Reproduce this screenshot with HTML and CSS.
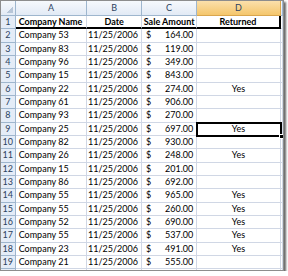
FILE: index.html
```html
<!DOCTYPE html>
<html lang="en">
<head>
  <meta charset="UTF-8" />
  <title>Sales sheet</title>
  <link rel="stylesheet" href="styles.css">
</head>
<body>

  <div class="sheet">
    <div class="row head">
      <div class="corner"></div>
      <div>A</div>
      <div>B</div>
      <div>C</div>
      <div class="active">D</div>
      <div></div>
    </div>
    <div class="row">
      <div class="num">1</div>
      <div class="cell title name">Company Name</div>
      <div class="cell title mid">Date</div>
      <div class="cell title mid">Sale Amount</div>
      <div class="cell title mid end">Returned</div>
      <div class="cell"></div>
    </div>
    <div class="row">
      <div class="num">2</div>
      <div class="cell name">Company 53</div>
      <div class="cell date">11/25/2006</div>
      <div class="cell money"><span>$</span><span>164.00</span></div>
      <div class="cell mid"></div>
      <div class="cell"></div>
    </div>
    <div class="row">
      <div class="num">3</div>
      <div class="cell name">Company 83</div>
      <div class="cell date">11/25/2006</div>
      <div class="cell money"><span>$</span><span>119.00</span></div>
      <div class="cell mid"></div>
      <div class="cell"></div>
    </div>
    <div class="row">
      <div class="num">4</div>
      <div class="cell name">Company 96</div>
      <div class="cell date">11/25/2006</div>
      <div class="cell money"><span>$</span><span>349.00</span></div>
      <div class="cell mid"></div>
      <div class="cell"></div>
    </div>
    <div class="row">
      <div class="num">5</div>
      <div class="cell name">Company 15</div>
      <div class="cell date">11/25/2006</div>
      <div class="cell money"><span>$</span><span>843.00</span></div>
      <div class="cell mid"></div>
      <div class="cell"></div>
    </div>
    <div class="row">
      <div class="num">6</div>
      <div class="cell name">Company 22</div>
      <div class="cell date">11/25/2006</div>
      <div class="cell money"><span>$</span><span>274.00</span></div>
      <div class="cell mid">Yes</div>
      <div class="cell"></div>
    </div>
    <div class="row">
      <div class="num">7</div>
      <div class="cell name">Company 61</div>
      <div class="cell date">11/25/2006</div>
      <div class="cell money"><span>$</span><span>906.00</span></div>
      <div class="cell mid"></div>
      <div class="cell"></div>
    </div>
    <div class="row">
      <div class="num">8</div>
      <div class="cell name">Company 93</div>
      <div class="cell date">11/25/2006</div>
      <div class="cell money"><span>$</span><span>270.00</span></div>
      <div class="cell mid"></div>
      <div class="cell"></div>
    </div>
    <div class="row">
      <div class="num active">9</div>
      <div class="cell name">Company 25</div>
      <div class="cell date">11/25/2006</div>
      <div class="cell money"><span>$</span><span>697.00</span></div>
      <div class="cell mid selected">Yes</div>
      <div class="cell"></div>
    </div>
    <div class="row">
      <div class="num">10</div>
      <div class="cell name">Company 82</div>
      <div class="cell date">11/25/2006</div>
      <div class="cell money"><span>$</span><span>930.00</span></div>
      <div class="cell mid"></div>
      <div class="cell"></div>
    </div>
    <div class="row">
      <div class="num">11</div>
      <div class="cell name">Company 26</div>
      <div class="cell date">11/25/2006</div>
      <div class="cell money"><span>$</span><span>248.00</span></div>
      <div class="cell mid">Yes</div>
      <div class="cell"></div>
    </div>
    <div class="row">
      <div class="num">12</div>
      <div class="cell name">Company 15</div>
      <div class="cell date">11/25/2006</div>
      <div class="cell money"><span>$</span><span>201.00</span></div>
      <div class="cell mid"></div>
      <div class="cell"></div>
    </div>
    <div class="row">
      <div class="num">13</div>
      <div class="cell name">Company 86</div>
      <div class="cell date">11/25/2006</div>
      <div class="cell money"><span>$</span><span>692.00</span></div>
      <div class="cell mid"></div>
      <div class="cell"></div>
    </div>
    <div class="row">
      <div class="num">14</div>
      <div class="cell name">Company 55</div>
      <div class="cell date">11/25/2006</div>
      <div class="cell money"><span>$</span><span>965.00</span></div>
      <div class="cell mid">Yes</div>
      <div class="cell"></div>
    </div>
    <div class="row">
      <div class="num">15</div>
      <div class="cell name">Company 55</div>
      <div class="cell date">11/25/2006</div>
      <div class="cell money"><span>$</span><span>260.00</span></div>
      <div class="cell mid">Yes</div>
      <div class="cell"></div>
    </div>
    <div class="row">
      <div class="num">16</div>
      <div class="cell name">Company 52</div>
      <div class="cell date">11/25/2006</div>
      <div class="cell money"><span>$</span><span>690.00</span></div>
      <div class="cell mid">Yes</div>
      <div class="cell"></div>
    </div>
    <div class="row">
      <div class="num">17</div>
      <div class="cell name">Company 55</div>
      <div class="cell date">11/25/2006</div>
      <div class="cell money"><span>$</span><span>537.00</span></div>
      <div class="cell mid">Yes</div>
      <div class="cell"></div>
    </div>
    <div class="row">
      <div class="num">18</div>
      <div class="cell name">Company 23</div>
      <div class="cell date">11/25/2006</div>
      <div class="cell money"><span>$</span><span>491.00</span></div>
      <div class="cell mid">Yes</div>
      <div class="cell"></div>
    </div>
    <div class="row">
      <div class="num">19</div>
      <div class="cell name">Company 21</div>
      <div class="cell date">11/25/2006</div>
      <div class="cell money"><span>$</span><span>555.00</span></div>
      <div class="cell mid"></div>
      <div class="cell"></div>
    </div>
    <!-- row 20 is only a sliver under the frame edge -->
    <div class="row">
      <div class="num"></div>
      <div class="cell"></div>
      <div class="cell"></div>
      <div class="cell"></div>
      <div class="cell"></div>
      <div class="cell"></div>
    </div>
  </div>

</body>
</html>
```

FILE: styles.css
```css
body {
  margin: 0;
  background: #fff;
  font-family: Lato, 'Liberation Sans', sans-serif;
}
.sheet {
  width: 282px;
  height: 269px;
  border: 1px solid #8d8d8d;
  overflow: hidden;
  background: #fff;
  box-shadow: 2px 2px 2px rgba(0, 0, 0, 0.6);
}
.row {
  display: grid;
  grid-template-columns: 14.7px 71.6px 54.7px 55.3px 83.4px 1fr;
  height: 13.333px;
}
.row > div {
  box-sizing: border-box;
  border-right: 1px solid #d0d7e5;
  border-bottom: 1px solid #d0d7e5;
  font-size: 9px;
  line-height: 12.6px;
  white-space: nowrap;
  overflow: hidden;
  color: #000;
}
.head {
  height: 15px;
}
.head > div {
  background: linear-gradient(#f6f9fc, #e2eaf5);
  border-color: #9eb6ce;
  text-align: center;
  line-height: 14px;
  color: #2b4260;
}
.head .active,
.num.active {
  background: linear-gradient(#fbe0ab, #f4c66c);
  border-color: #d9a64e;
}
.corner {
  background: linear-gradient(135deg, transparent 62%, #b7c6d8 62%) no-repeat 3px 3px / 9px 9px,
              linear-gradient(#f6f9fc, #e2eaf5) !important;
}
.row > .num {
  background: #e4ecf7;
  border-color: #9eb6ce;
  text-align: center;
  color: #2b4260;
}
.name {
  padding-left: 3px;
}
.date {
  text-align: right;
  padding-right: 3px;
}
.mid {
  text-align: center;
}
.money {
  display: flex;
  justify-content: space-between;
  padding: 0 3px 0 4px;
}
.title {
  font-weight: bold;
}
.row > .title {
  border-bottom: 2px solid #000;
}
.row > .end {
  border-right: 2px solid #000;
}
.row > .selected {
  position: relative;
  overflow: visible;
  outline: 2px solid #000;
  outline-offset: -1px;
}
.selected::after {
  content: '';
  position: absolute;
  right: -4px;
  bottom: -4px;
  width: 3px;
  height: 3px;
  background: #000;
  border: 1px solid #fff;
}
```
